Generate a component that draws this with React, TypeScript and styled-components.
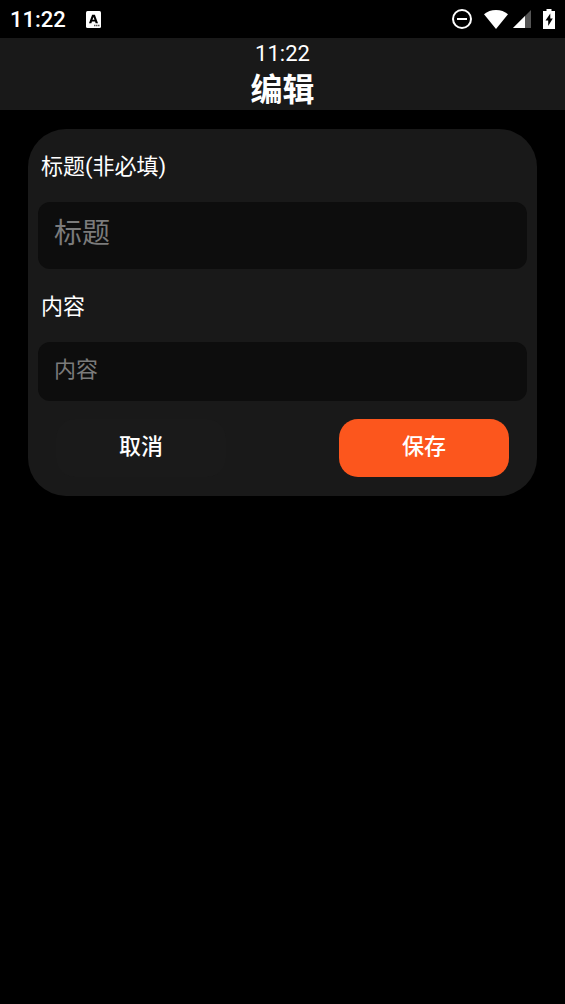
import React from "react";
import styled, { createGlobalStyle } from "styled-components";

const GlobalStyle = createGlobalStyle`
  *, *::before, *::after { box-sizing: border-box; }
  body {
    margin: 0;
    background: #000;
    color: #fff;
    font-family: Roboto, "Noto Sans CJK SC", sans-serif;
  }
`;

const Screen = styled.div`
  display: flex;
  flex-direction: column;
  min-height: 100vh;
`;

const StatusBar = styled.div`
  display: flex;
  align-items: center;
  justify-content: space-between;
  height: 38px;
  padding: 0 10px;
`;

const StatusGroup = styled.div<{ $gap: number }>`
  display: flex;
  align-items: center;
  gap: ${({ $gap }) => $gap}px;

  svg { display: block; }
`;

const StatusTime = styled.span`
  font-size: 22px;
  line-height: 38px;
  padding-top: 2px;
  font-weight: 500;
`;

const Header = styled.header`
  display: flex;
  flex-direction: column;
  align-items: center;
  height: 72px;
  background: #191919;
`;

const HeaderTime = styled.span`
  font-size: 22px;
  line-height: 32px;
`;

const HeaderTitle = styled.h1`
  margin: 0;
  font-size: 32px;
  line-height: 40px;
  font-weight: 700;
`;

const Card = styled.form`
  display: flex;
  flex-direction: column;
  margin: 19px 28px 0;
  padding: 0 10px 19px;
  border-radius: 38px;
  background: #191919;
`;

const Label = styled.label`
  padding: 2px 3px 0;
  font-size: 22px;
  line-height: 71px;
`;

const Field = styled.input<{ $large?: boolean }>`
  width: 100%;
  height: ${({ $large }) => ($large ? 67 : 59)}px;
  padding: 0 16px 4px;
  border: 0;
  border-radius: 12px;
  outline: 0;
  background: #0d0d0d;
  color: #fff;
  font-family: inherit;
  font-size: ${({ $large }) => ($large ? 28 : 22)}px;

  &::placeholder { color: #7b7b7b; opacity: 1; }
`;

const Actions = styled.div`
  display: flex;
  justify-content: space-between;
  margin-top: 18px;
  padding: 0 18px;
`;

const Button = styled.button<{ $primary?: boolean }>`
  width: 170px;
  height: 58px;
  padding: 0 0 8px;
  border: 0;
  border-radius: 19px;
  background: ${({ $primary }) => ($primary ? "#fc561d" : "#1a1a1a")};
  color: #fff;
  font-family: inherit;
  font-size: 22px;
  font-weight: 500;
`;

const KeyboardIcon = () => (
  <svg width="15" height="17" viewBox="0 0 15 17" aria-hidden="true">
    <rect width="15" height="17" rx="1.5" fill="#fff" />
    <path
      d="M3 12.200 6.100 3.800h2.800l3.100 8.400H9.600L9.100 10.600H5.900L5.400 12.200ZM6.500 8.800h2L7.500 5.900Z"
      fill="#000"
      fillRule="evenodd"
    />
    <path d="M8 14.500h6" stroke="#555" strokeWidth="1.400" strokeDasharray="1.500 0.500" />
  </svg>
);

const DoNotDisturbIcon = () => (
  <svg width="20" height="20" viewBox="0 0 20 20" aria-hidden="true">
    <circle cx="10" cy="10" r="9" fill="none" stroke="#fff" strokeWidth="2" />
    <path d="M5 10h10" stroke="#fff" strokeWidth="2" />
  </svg>
);

const WifiIcon = () => (
  <svg width="24" height="19" viewBox="0 0 24 19" aria-hidden="true">
    <path d="M12 19 0 4.200C3.200 1.500 7.400 0 12 0s8.800 1.500 12 4.200Z" fill="#fff" />
  </svg>
);

const SignalIcon = () => (
  <svg width="18" height="18" viewBox="0 0 18 18" aria-hidden="true">
    <path d="M0 18 18 0v18Z" fill="#555" />
    <path d="M0 18 12 6v12Z" fill="#fff" />
  </svg>
);

const BatteryIcon = () => (
  <svg width="12" height="20" viewBox="0 0 12 20" aria-hidden="true">
    <path d="M3.500 0h5v2H12v18H0V2h3.500Z" fill="#fff" />
    <path d="M7.300 4.500 2.500 11.500H5.200v5.500L9.800 9.500H7.300Z" fill="#000" />
  </svg>
);

export default function App() {
  return (
    <Screen>
      <GlobalStyle />
      <StatusBar>
        <StatusGroup $gap={20}>
          <StatusTime>11:22</StatusTime>
          <KeyboardIcon />
        </StatusGroup>
        <StatusGroup $gap={12}>
          <DoNotDisturbIcon />
          <StatusGroup $gap={5}>
            <WifiIcon />
            <SignalIcon />
          </StatusGroup>
          <BatteryIcon />
        </StatusGroup>
      </StatusBar>
      <Header>
        <HeaderTime>11:22</HeaderTime>
        <HeaderTitle>编辑</HeaderTitle>
      </Header>
      <main>
        <Card onSubmit={(event) => event.preventDefault()}>
          <Label htmlFor="title">标题(非必填)</Label>
          <Field id="title" type="text" placeholder="标题" $large />
          <Label htmlFor="content">内容</Label>
          <Field id="content" type="text" placeholder="内容" />
          <Actions>
            <Button type="button">取消</Button>
            <Button type="submit" $primary>保存</Button>
          </Actions>
        </Card>
      </main>
    </Screen>
  );
}
